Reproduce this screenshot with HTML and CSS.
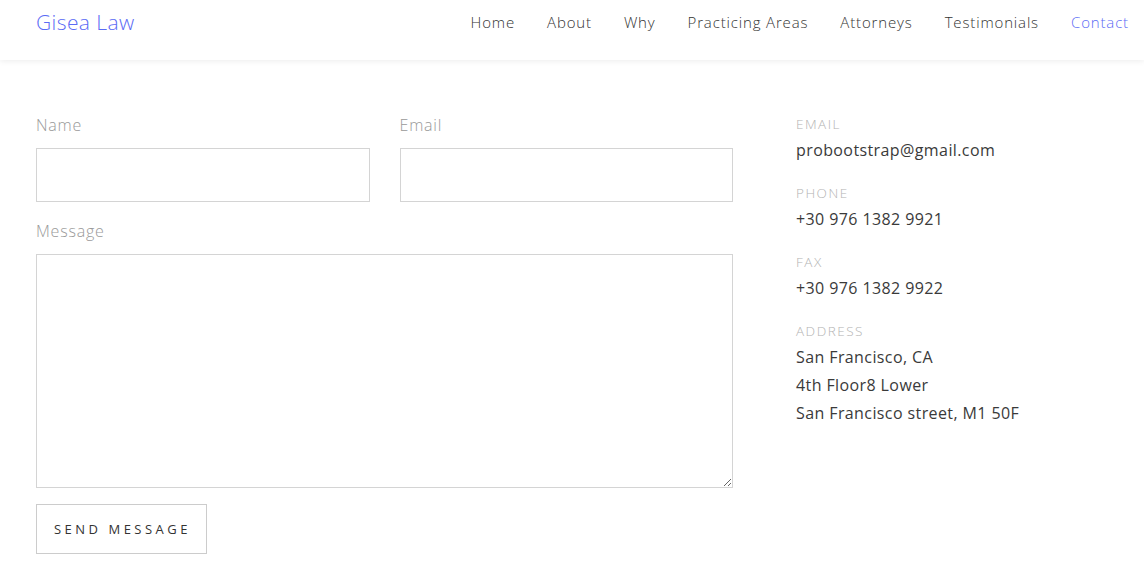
FILE: index.html
```html
<!DOCTYPE html>
<html lang="en">
<head>
<meta charset="utf-8">
<title>Gisea Law - Contact</title>
<link rel="stylesheet" href="styles.css">
</head>
<body>
<header class="navbar">
  <a class="brand" href="#">Gisea Law</a>
  <nav class="nav">
    <a href="#">Home</a>
    <a href="#">About</a>
    <a href="#">Why</a>
    <a href="#">Practicing Areas</a>
    <a href="#">Attorneys</a>
    <a href="#">Testimonials</a>
    <a href="#" class="active">Contact</a>
  </nav>
</header>
<main class="contact">
  <form class="form">
    <div class="row">
      <div class="field">
        <label for="name">Name</label>
        <input id="name" type="text">
      </div>
      <div class="field">
        <label for="email">Email</label>
        <input id="email" type="email">
      </div>
    </div>
    <div class="field">
      <label for="message">Message</label>
      <textarea id="message"></textarea>
    </div>
    <div><button type="button" class="btn">Send Message</button></div>
  </form>
  <aside class="info">
    <div class="item">
      <span class="key">Email</span>
      <p>probootstrap@gmail.com</p>
    </div>
    <div class="item">
      <span class="key">Phone</span>
      <p>+30 976 1382 9921</p>
    </div>
    <div class="item">
      <span class="key">Fax</span>
      <p>+30 976 1382 9922</p>
    </div>
    <div class="item">
      <span class="key">Address</span>
      <p>San Francisco, CA<br>4th Floor8 Lower<br>San Francisco street, M1 50F</p>
    </div>
  </aside>
</main>
</body>
</html>
```
FILE: styles.css
```css
* { box-sizing: border-box; }
body {
  margin: 0;
  background: #fff;
  font-family: "Open Sans", "Noto Sans", Arial, sans-serif;
  font-weight: 300;
  color: #333;
}
a { text-decoration: none; }
.navbar {
  height: 60px;
  display: flex;
  align-items: center;
  justify-content: space-between;
  padding: 0 15px 0 36px;
  box-shadow: 0 1px 6px rgba(0,0,0,0.08);
}
.brand {
  color: #5b6bf5;
  font-size: 21px;
  font-weight: 300;
  letter-spacing: 0.4px;
  margin-top: -16px;
}
.nav {
  display: flex;
  gap: 32px;
  margin-top: -16px;
}
.nav a {
  color: #333;
  font-size: 15px;
  letter-spacing: 0.85px;
}
.nav a.active { color: #5b6bf5; }
.contact {
  display: flex;
  gap: 63px;
  padding: 53px 36px 0 36px;
}
.form {
  width: 697px;
  display: flex;
  flex-direction: column;
}
.row {
  display: flex;
  gap: 30px;
}
.row .field { flex: 1; }
.field label {
  display: block;
  font-size: 16px;
  color: #999;
  line-height: 24px;
  letter-spacing: 0.8px;
  margin-bottom: 11px;
}
.field input {
  display: block;
  width: 100%;
  height: 54px;
  border: 1px solid #d4d4d4;
  border-radius: 0;
  margin-bottom: 17px;
}
.field textarea {
  display: block;
  width: 100%;
  height: 234px;
  border: 1px solid #d4d4d4;
  border-radius: 0;
  resize: vertical;
  margin-bottom: 16px;
}
.btn {
  width: 171px;
  height: 50px;
  background: #fff;
  border: 1px solid #ccc;
  font-family: inherit;
  font-weight: 400;
  font-size: 13px;
  letter-spacing: 3.5px;
  text-transform: uppercase;
  color: #333;
  padding: 0 0 0 2px;
}
.info {
  padding-top: 1px;
}
.item { margin-bottom: 19px; }
.key {
  display: block;
  font-size: 13.5px;
  text-transform: uppercase;
  color: #b3b3b3;
  letter-spacing: 1.5px;
  line-height: 20px;
  margin-bottom: 2px;
}
.item p {
  margin: 0;
  font-size: 16px;
  line-height: 28px;
  color: #3a3a3a;
  font-weight: 400;
  letter-spacing: 0.4px;
}
```
